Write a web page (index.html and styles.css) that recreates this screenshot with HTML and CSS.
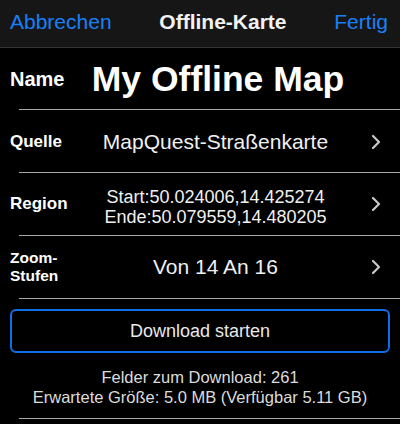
FILE: index.html
```html
<!DOCTYPE html>
<html lang="de">
<head>
<meta charset="utf-8">
<title>Offline-Karte</title>
<link rel="stylesheet" href="styles.css">
</head>
<body>
<header class="nav">
  <span class="nav-btn">Abbrechen</span>
  <span class="nav-title">Offline-Karte</span>
  <span class="nav-btn">Fertig</span>
</header>

<div class="row row-name">
  <div class="label label-name">Name</div>
  <div class="value value-name">My Offline Map</div>
  <div class="chev chev-hidden"></div>
</div>
<div class="sep"></div>

<div class="row row-source">
  <div class="label">Quelle</div>
  <div class="value value-big">MapQuest-Straßenkarte</div>
  <div class="chev">
    <svg width="10" height="16" viewBox="0 0 10 16"><polyline points="2,2 8,8 2,14" fill="none" stroke="#c9c9c9" stroke-width="2.2" stroke-linecap="round" stroke-linejoin="round"/></svg>
  </div>
</div>
<div class="sep"></div>

<div class="row">
  <div class="label">Region</div>
  <div class="value value-small">Start:50.024006,14.425274<br>Ende:50.079559,14.480205</div>
  <div class="chev">
    <svg width="10" height="16" viewBox="0 0 10 16"><polyline points="2,2 8,8 2,14" fill="none" stroke="#c9c9c9" stroke-width="2.2" stroke-linecap="round" stroke-linejoin="round"/></svg>
  </div>
</div>
<div class="sep"></div>

<div class="row">
  <div class="label label-zoom">Zoom-<br>Stufen</div>
  <div class="value value-big">Von 14 An 16</div>
  <div class="chev">
    <svg width="10" height="16" viewBox="0 0 10 16"><polyline points="2,2 8,8 2,14" fill="none" stroke="#c9c9c9" stroke-width="2.2" stroke-linecap="round" stroke-linejoin="round"/></svg>
  </div>
</div>
<div class="sep"></div>

<div class="btn">Download starten</div>

<div class="info">Felder zum Download: 261<br>Erwartete Größe: 5.0 MB (Verfügbar 5.11 GB)</div>
<div class="sep"></div>
</body>
</html>
```

FILE: styles.css
```css
html, body {
  margin: 0;
  padding: 0;
  background: #000;
}
body {
  font-family: "Liberation Sans", Arial, sans-serif;
  color: #fff;
  width: 400px;
  height: 424px;
  overflow: hidden;
}
.nav {
  height: 48px;
  box-sizing: border-box;
  padding: 10px 12px 0 10px;
  background: #161616;
  border-bottom: 1px solid #333;
  display: flex;
  justify-content: space-between;
  align-items: flex-start;
  font-size: 21px;
  line-height: 24px;
}
.nav-btn {
  color: #1a80f7;
}
.nav-title {
  font-weight: bold;
  color: #f2f2f2;
}
.row {
  height: 62px;
  display: flex;
  align-items: center;
  padding: 0 19px 0 10px;
}
.row-name {
  height: 61px;
}
.row-source {
  padding-top: 2px;
  box-sizing: border-box;
}
.label {
  width: 60px;
  flex: none;
  font-weight: bold;
  font-size: 17px;
  line-height: 20px;
}
.label-name {
  font-size: 20px;
}
.label-zoom {
  font-size: 15.5px;
  line-height: 18px;
}
.value {
  flex: 1;
  text-align: center;
  color: #f0f0f0;
}
.value-name {
  font-size: 35.5px;
  font-weight: bold;
  color: #fff;
  padding-left: 5px;
  line-height: 40px;
}
.value-big {
  font-size: 21px;
  line-height: 24px;
}
.value-small {
  font-size: 18px;
  line-height: 20px;
  padding-top: 6px;
}
.chev {
  width: 10px;
  height: 16px;
  margin-left: 10px;
  flex: none;
}
.chev svg {
  display: block;
}
.chev-hidden {
  visibility: hidden;
}
.sep {
  height: 1px;
  margin-left: 19px;
  background: #a9a9a9;
}
.btn {
  margin: 10px 10px 0 10px;
  height: 44px;
  box-sizing: border-box;
  border: 2px solid #0c6fe6;
  border-radius: 6px;
  display: flex;
  align-items: center;
  justify-content: center;
  font-size: 18px;
  color: #e8e8e8;
}
.info {
  margin: 14px 0 11px 0;
  text-align: center;
  font-size: 16.5px;
  line-height: 20px;
  color: #dcdcdc;
}
```
